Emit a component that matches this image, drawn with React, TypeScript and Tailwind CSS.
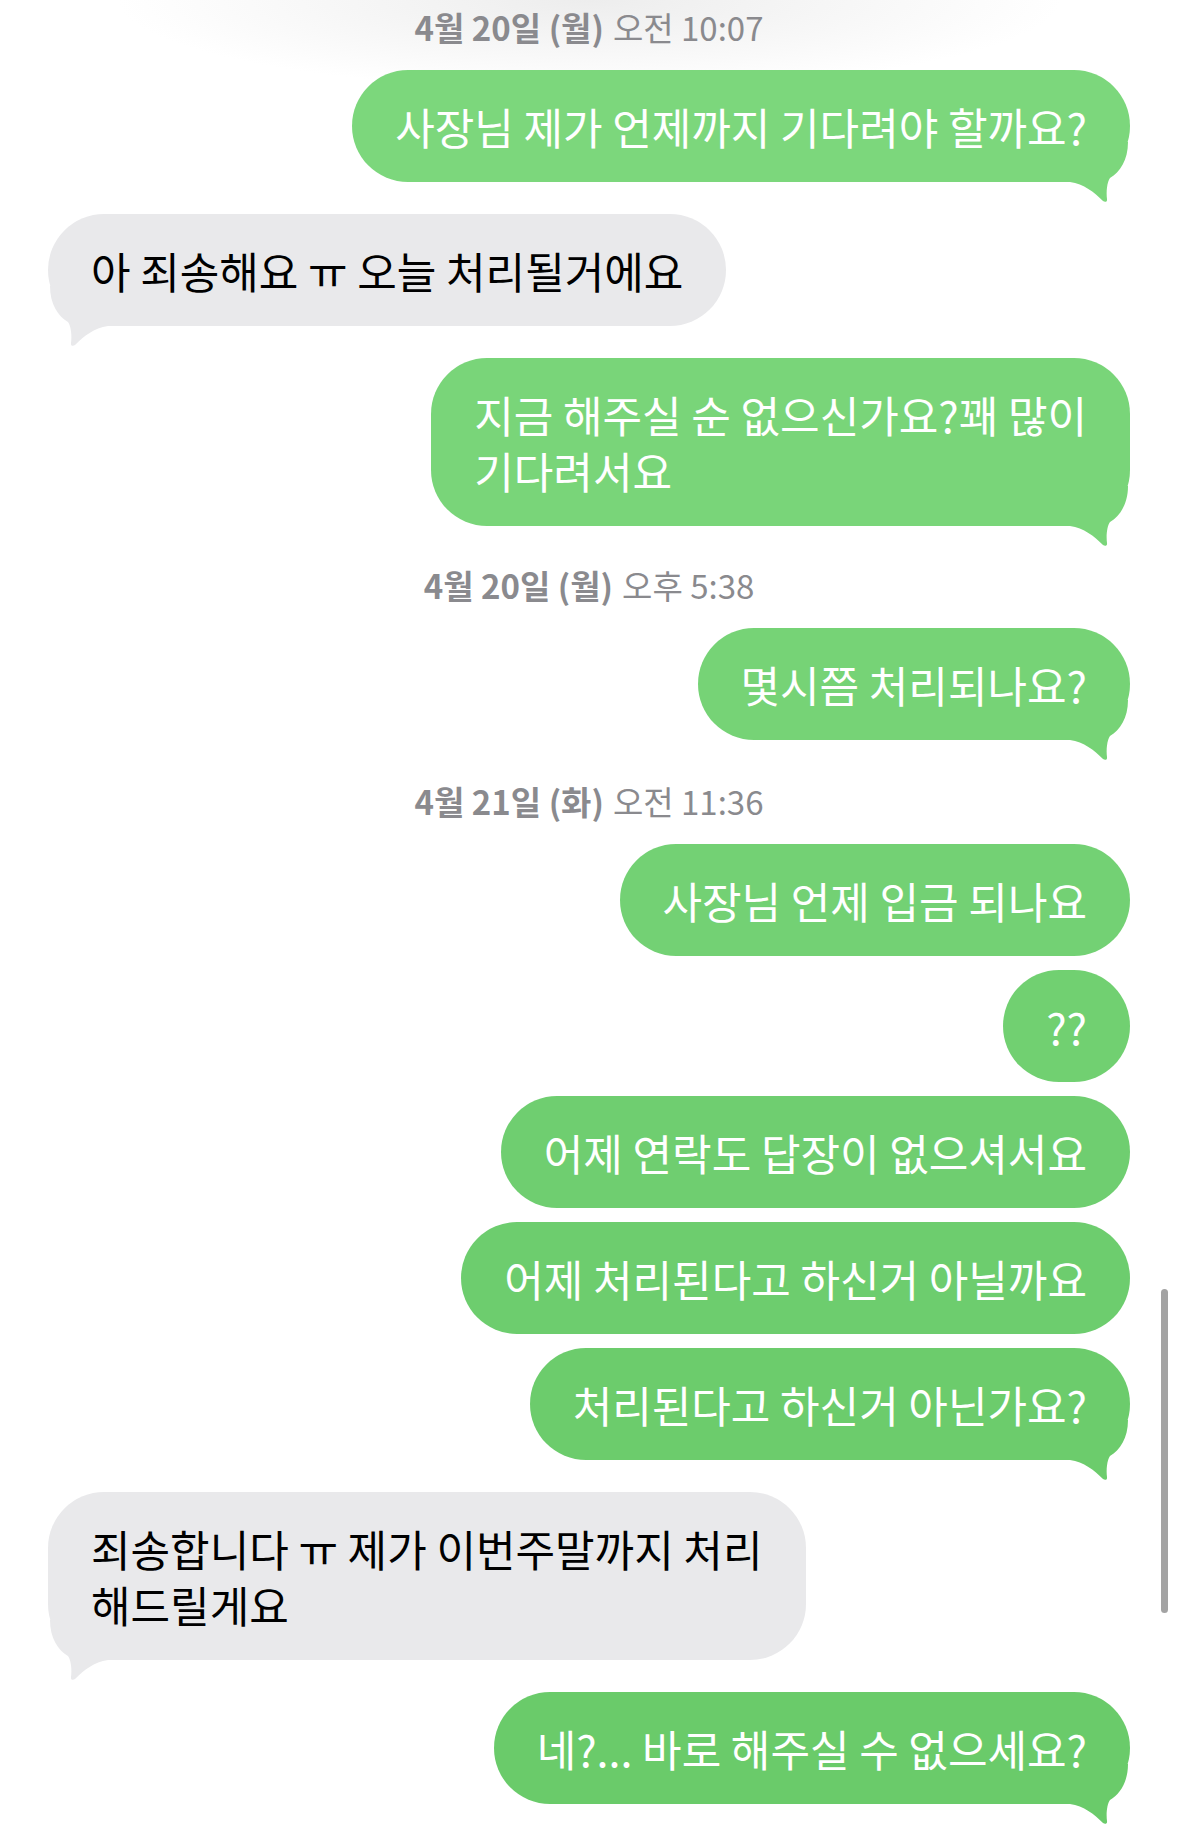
import clsx from "clsx";

type Item =
  | { kind: "time"; date: string; time: string; gap: string }
  | {
      kind: "out" | "in";
      lines: string[];
      tail: boolean;
      gap: string;
      bg?: string;
      fill?: string;
    };

// 위에서 아래로 갈수록 초록이 조금씩 진해짐 (iOS 말풍선 그라데이션 흉내)
const items: Item[] = [
  { kind: "time", date: "4월 20일 (월)", time: "오전 10:07", gap: "mt-[7px]" },
  {
    kind: "out",
    lines: ["사장님 제가 언제까지 기다려야 할까요?"],
    tail: true,
    gap: "mt-[21px]",
    bg: "bg-[#7cd77c]",
    fill: "text-[#7cd77c]",
  },
  { kind: "in", lines: ["아 죄송해요 ㅠ 오늘 처리될거에요"], tail: true, gap: "mt-[32px]" },
  {
    kind: "out",
    lines: ["지금 해주실 순 없으신가요?꽤 많이", "기다려서요"],
    tail: true,
    gap: "mt-[32px]",
    bg: "bg-[#79d579]",
    fill: "text-[#79d579]",
  },
  { kind: "time", date: "4월 20일 (월)", time: "오후 5:38", gap: "mt-[39px]" },
  {
    kind: "out",
    lines: ["몇시쯤 처리되나요?"],
    tail: true,
    gap: "mt-[21px]",
    bg: "bg-[#76d376]",
    fill: "text-[#76d376]",
  },
  { kind: "time", date: "4월 21일 (화)", time: "오전 11:36", gap: "mt-[41px]" },
  {
    kind: "out",
    lines: ["사장님 언제 입금 되나요"],
    tail: false,
    gap: "mt-[21px]",
    bg: "bg-[#73d174]",
  },
  { kind: "out", lines: ["??"], tail: false, gap: "mt-[14px]", bg: "bg-[#71d071]" },
  {
    kind: "out",
    lines: ["어제 연락도 답장이 없으셔서요"],
    tail: false,
    gap: "mt-[14px]",
    bg: "bg-[#6fce70]",
  },
  {
    kind: "out",
    lines: ["어제 처리된다고 하신거 아닐까요"],
    tail: false,
    gap: "mt-[14px]",
    bg: "bg-[#6dcd6e]",
  },
  {
    kind: "out",
    lines: ["처리된다고 하신거 아닌가요?"],
    tail: true,
    gap: "mt-[14px]",
    bg: "bg-[#6ccc6c]",
    fill: "text-[#6ccc6c]",
  },
  {
    kind: "in",
    lines: ["죄송합니다 ㅠ 제가 이번주말까지 처리", "해드릴게요"],
    tail: true,
    gap: "mt-[32px]",
  },
  {
    kind: "out",
    lines: ["네?... 바로 해주실 수 없으세요?"],
    tail: true,
    gap: "mt-[32px]",
    bg: "bg-[#6acb6a]",
    fill: "text-[#6acb6a]",
  },
];

function Tail({ side, fill }: { side: "out" | "in"; fill: string }) {
  return (
    <svg
      viewBox="0 0 60 64"
      className={clsx(
        "absolute bottom-[-24px] h-[64px] w-[60px]",
        side === "out" ? "right-0" : "left-0 -scale-x-100",
        fill
      )}
      aria-hidden="true"
    >
      <path
        d="M58 0C58 18 50 30 40 36C37 40 36 50 37 57C37.5 60 35 60.5 33 59C24 50 14 42 0 40L0 0Z"
        fill="currentColor"
      />
    </svg>
  );
}

function Stamp({ date, time, gap }: { date: string; time: string; gap: string }) {
  return (
    <div className={clsx("flex h-[42px] items-center justify-center text-[33px] text-[#8a8a8e]", gap)}>
      <span className="font-semibold">{date}</span>
      <span className="ml-[9px]">{time}</span>
    </div>
  );
}

export default function App() {
  return (
    <div className="relative min-h-screen overflow-hidden bg-white font-['Noto_Sans_CJK_KR','Noto_Sans',sans-serif]">
      {/* 상단 네비 블러 그림자 */}
      <div className="pointer-events-none absolute inset-x-0 top-0 h-[90px] bg-[radial-gradient(ellipse_40%_100%_at_50%_0%,#ededed,#ffffff00)]" />

      <div className="relative flex flex-col pl-[48px] pr-[49px] pb-[40px]">
        {items.map((m, i) => {
          if (m.kind === "time") return <Stamp key={i} date={m.date} time={m.time} gap={m.gap} />;
          const out = m.kind === "out";
          return (
            <div key={i} className={clsx("flex", out ? "justify-end" : "justify-start", m.gap)}>
              <div
                className={clsx(
                  "relative whitespace-nowrap rounded-[56px] px-[43px] py-[28px] text-[43px] leading-[56px]",
                  out ? clsx("text-white", m.bg) : "bg-[#e9e9eb] text-black"
                )}
              >
                {m.lines.map((l, j) => (
                  <div key={j} className="relative z-10">
                    {l}
                  </div>
                ))}
                {m.tail && <Tail side={m.kind} fill={out ? m.fill ?? "" : "text-[#e9e9eb]"} />}
              </div>
            </div>
          );
        })}
      </div>

      {/* 스크롤 막대 */}
      <div className="pointer-events-none absolute right-[11px] top-[1289px] h-[324px] w-[7px] rounded-full bg-[#a3a3a3]" />
    </div>
  );
}
